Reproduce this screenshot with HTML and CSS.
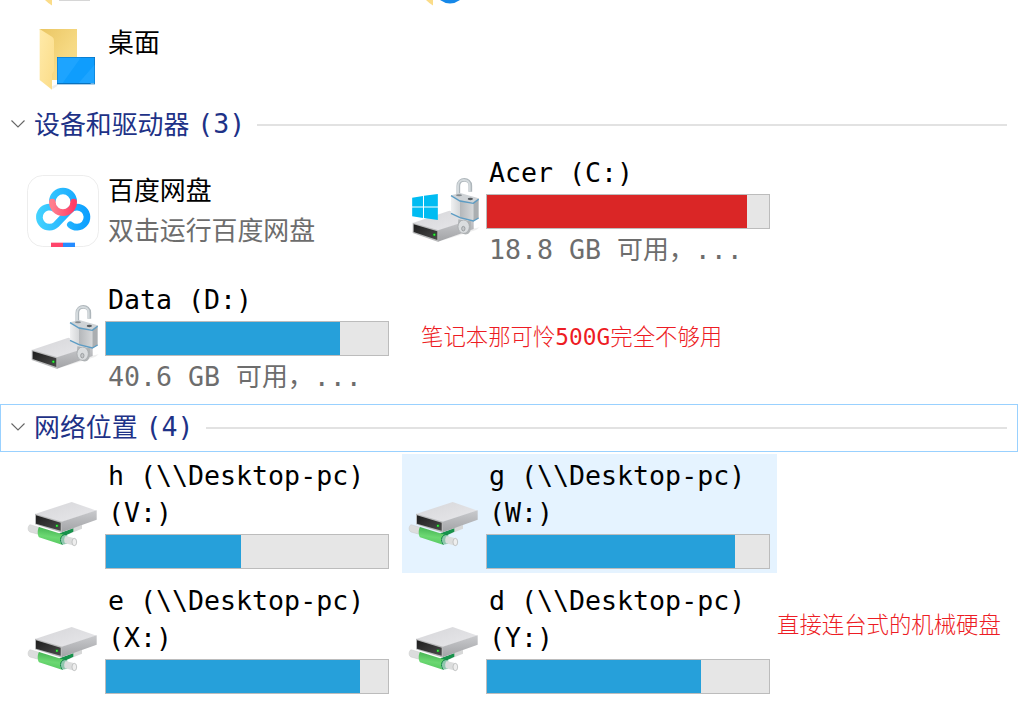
FILE: index.html
```html
<!DOCTYPE html>
<html lang="zh-CN">
<head>
<meta charset="utf-8">
<title>此电脑</title>
<link rel="stylesheet" href="styles.css">
</head>
<body>
<svg class="defs" width="0" height="0" aria-hidden="true">
  <defs>
    <linearGradient id="top" x1="0" y1="0" x2="1" y2="1"><stop offset="0" stop-color="#d6d6d9"/><stop offset="1" stop-color="#e8e8eb"/></linearGradient>
    <linearGradient id="side" x1="0" y1="0" x2="0" y2="1"><stop offset="0" stop-color="#c9cacd"/><stop offset="1" stop-color="#a2a3a6"/></linearGradient>
    <linearGradient id="face" x1="0" y1="0" x2="1" y2="1"><stop offset="0" stop-color="#1e1e1e"/><stop offset="1" stop-color="#4a4a4a"/></linearGradient>
    <linearGradient id="green" x1=".3" y1="0" x2=".1" y2="1"><stop offset="0" stop-color="#44b352"/><stop offset=".5" stop-color="#6cd872"/><stop offset="1" stop-color="#4fc45b"/></linearGradient>
    <linearGradient id="lockL" x1="0" y1="0" x2="1" y2="0"><stop offset="0" stop-color="#f0f1f2"/><stop offset="1" stop-color="#d4d6d8"/></linearGradient>
    <linearGradient id="lockR" x1="0" y1="0" x2="1" y2="0"><stop offset="0" stop-color="#b4b7ba"/><stop offset="1" stop-color="#d6d8da"/></linearGradient>
    <linearGradient id="fold" x1="0" y1="0" x2="1" y2="1"><stop offset="0" stop-color="#ffeaa9"/><stop offset="1" stop-color="#fbdc88"/></linearGradient>
    <linearGradient id="back" x1="0" y1="0" x2="1" y2="1"><stop offset="0" stop-color="#eac663"/><stop offset=".6" stop-color="#f6d983"/><stop offset="1" stop-color="#f9df90"/></linearGradient>
    <linearGradient id="cloud" gradientUnits="userSpaceOnUse" x1="48" y1="0" x2="210" y2="0"><stop offset="0" stop-color="#45d3fe"/><stop offset="1" stop-color="#0a9dff"/></linearGradient>
    <linearGradient id="pink" x1="0" y1="0" x2="1" y2="0"><stop offset="0" stop-color="#ff7f8e"/><stop offset="1" stop-color="#ff3d65"/></linearGradient>

    <symbol id="lockdrive" viewBox="33 54 204 204">
      <path d="M120 249L225 216L236 208L215 212Z" fill="#eee"/>
      <path d="M35 195L145 158L218 184L111 218Z" fill="url(#top)"/>
      <path d="M111 217L218 182V213L111 251Z" fill="url(#side)"/>
      <path d="M35 194L112 217V252L35 225Z" fill="#b9babb"/>
      <path d="M38 199L109 220V246L38 222Z" fill="url(#face)"/>
      <circle cx="100" cy="230" r="5" fill="#167c20"/><circle cx="100" cy="230" r="3" fill="#35f63e"/>
      <path d="M172 108V84C172 59 208 60 208 83V101" fill="none" stroke="#aeb6bb" stroke-width="11"/>
      <path d="M171 108V84C171 60 206 60 206 83V101" fill="none" stroke="#d4dadd" stroke-width="6"/>
      <path d="M150 112L178 105L233 121L218 135L179 130Z" fill="#cfd3d6"/>
      <path d="M150 112L177 127V181L150 167Z" fill="url(#lockL)"/>
      <path d="M177 127L217 133V190L177 181Z" fill="url(#lockR)"/>
      <path d="M217 133L233 121V180L217 190Z" fill="#aaaeb1"/>
      <path d="M150 113L177 129L217 136L233 124M150 166L177 179L217 189L233 180" fill="none" stroke="#5c9cc4" stroke-width="4"/>
      <ellipse cx="208" cy="123" rx="8" ry="3.5" fill="#555b60"/>
      <ellipse cx="174" cy="112" rx="9" ry="3" fill="#848b90"/>
      <path d="M172 184L210 190V210C208 224 202 231 190 229C178 225 172 214 171 202Z" fill="#b0b4b6"/>
      <ellipse cx="188" cy="206" rx="17" ry="20" fill="#dadddf" stroke="#a1a5a8" stroke-width="2"/>
      <ellipse cx="187" cy="212" rx="5" ry="7" fill="#c4c7c9" stroke="#85898c" stroke-width="2"/>
    </symbol>

    <symbol id="netdrive" viewBox="21 105 216 144">
      <path d="M145 190L186 180V191L145 208Z" fill="#d7d8d8"/>
      <path d="M118 205L160 190V200L138 211L120 222Z" fill="#17924b"/>
      <path d="M30 179L60 188V209L30 201C23 198 22 184 30 179Z" fill="#dcdddd" stroke="#c6c7c7" stroke-width="1.5"/>
      <path d="M57 186L132 209C120 213 117 230 126 239L57 217C52 210 52 194 57 186Z" fill="url(#green)"/>
      <path d="M132 209L142 211V236L126 239C118 230 121 212 132 209Z" fill="#8fc7ad"/>
      <path d="M140 209C122 206 116 227 127 239" fill="none" stroke="#138847" stroke-width="3"/>
      <path d="M137 213L164 220V242L135 235C131 228 132 218 137 213Z" fill="#dcdddd"/>
      <ellipse cx="163" cy="231" rx="7" ry="11" fill="#eeeeee" stroke="#aeb0b0" stroke-width="2"/>
      <path d="M45 147L155 111L230 137L125 171Z" fill="url(#top)"/>
      <path d="M125 170L230 136V164L125 202Z" fill="url(#side)"/>
      <path d="M45 146L126 170V203L45 178Z" fill="#b9babb"/>
      <path d="M48 151L122 173V197L48 176Z" fill="url(#face)"/>
      <rect x="107" y="178" width="8" height="8" fill="#198821"/><rect x="108" y="180" width="5" height="5" fill="#38f341"/>
    </symbol>

    <symbol id="winlogo" viewBox="0 0 76 77">
      <path d="M0 11L32 6V37H0ZM35 5L76 0V37H35ZM0 40H32V71L0 66ZM35 40H76V77L35 71Z" fill="#00bcf2"/>
    </symbol>
  </defs>
</svg>

<main class="explorer">
  <section class="folders">
    <div class="cutoff">
      <svg class="cut" width="60" height="6" viewBox="0 0 60 6"><path d="M4 0H11V5.5Q8 4 4 0Z" fill="#fbdc88"/><rect x="18" width="31" height="1" fill="#d6d6d6"/></svg>
      <svg class="cut" width="60" height="6" viewBox="0 0 60 6"><path d="M4 0H11V5.5Q8 4 4 0Z" fill="#fbdc88"/><path d="M18 0H38Q28 7 18 0Z" fill="#1688e8"/></svg>
    </div>
    <article class="tile tile-folder">
      <div class="icon">
        <svg width="60" height="62" viewBox="114 84 180 186">
          <path d="M119 87H231V240H156Z" fill="url(#back)"/>
          <path d="M119 87L157 111Q162 114 162 122V213L156 222V269L119 240Z" fill="url(#fold)"/>
          <path d="M157 258L172 252V258L157 268Z" fill="#eee"/>
          <rect x="171" y="171" width="114" height="82" fill="#0871bd"/>
          <rect x="173" y="173" width="110" height="76" fill="#0f9dfd"/>
          <path d="M173 173H242L188 249H173Z" fill="#1da4ff"/>
          <path d="M283 195V249H236Z" fill="#1ea4ff"/>
          <path d="M272 251H283" stroke="#b9e2ff" stroke-width="2"/>
        </svg>
      </div>
      <div class="body"><div class="name"><span class="cjk">桌面</span></div></div>
    </article>
  </section>

  <header class="group">
    <svg class="chevron" width="14" height="8" viewBox="0 0 14 8"><path d="M.5 .5L7 7L13.5 .5"/></svg>
    <h2><span class="cjk">设备和驱动器</span><span class="count">(3)</span></h2>
    <span class="rule"></span>
  </header>
  <section class="tiles devices">
    <article class="tile tile-app">
      <div class="icon">
        <svg width="72" height="72" viewBox="21 30 216 216">
          <rect x="22.5" y="31.5" width="213" height="213" rx="46" fill="#fff" stroke="#ededed" stroke-width="3"/>
          <g fill="none" stroke-width="20">
            <path d="M104 131A30 30 0 1 0 109 178L149 136A30 30 0 1 1 151 179" stroke="url(#cloud)" stroke-linecap="round"/>
            <path d="M97 110A32 32 0 1 1 161 110" stroke="url(#cloud)"/>
            <path d="M97 111A32 32 0 0 0 161 111" stroke="url(#pink)" stroke-linecap="round"/>
          </g>
          <rect x="93" y="233" width="36" height="13" fill="#ff456b"/><rect x="129" y="233" width="36" height="13" fill="#258cff"/>
        </svg>
      </div>
      <div class="body">
        <div class="name"><span class="cjk">百度网盘</span></div>
        <div class="sub"><span class="cjk">双击运行百度网盘</span></div>
      </div>
    </article>
    <article class="tile">
      <div class="icon icon-lock"><svg width="68" height="68"><use href="#lockdrive"/></svg><svg class="win" width="26" height="26"><use href="#winlogo"/></svg></div>
      <div class="body">
        <div class="name">Acer (C:)</div>
        <div class="bar"><div class="fill full" style="width:260px"></div></div>
        <div class="sub">18.8 GB <span class="cjk">可用，</span>...</div>
      </div>
    </article>
    <article class="tile">
      <div class="icon icon-lock"><svg width="68" height="68"><use href="#lockdrive"/></svg></div>
      <div class="body">
        <div class="name">Data (D:)</div>
        <div class="bar"><div class="fill" style="width:234px"></div></div>
        <div class="sub">40.6 GB <span class="cjk">可用，</span>...</div>
      </div>
    </article>
  </section>

  <header class="group focused">
    <svg class="chevron" width="14" height="8" viewBox="0 0 14 8"><path d="M.5 .5L7 7L13.5 .5"/></svg>
    <h2><span class="cjk">网络位置</span><span class="count">(4)</span></h2>
    <span class="rule"></span>
  </header>
  <section class="tiles network">
    <article class="tile">
      <div class="icon icon-net"><svg width="72" height="48"><use href="#netdrive"/></svg></div>
      <div class="body"><div class="name">h (\\Desktop-pc)<br>(V:)</div><div class="bar"><div class="fill" style="width:135px"></div></div></div>
    </article>
    <article class="tile hover">
      <div class="icon icon-net"><svg width="72" height="48"><use href="#netdrive"/></svg></div>
      <div class="body"><div class="name">g (\\Desktop-pc)<br>(W:)</div><div class="bar"><div class="fill" style="width:248px"></div></div></div>
    </article>
    <article class="tile">
      <div class="icon icon-net"><svg width="72" height="48"><use href="#netdrive"/></svg></div>
      <div class="body"><div class="name">e (\\Desktop-pc)<br>(X:)</div><div class="bar"><div class="fill" style="width:254px"></div></div></div>
    </article>
    <article class="tile">
      <div class="icon icon-net"><svg width="72" height="48"><use href="#netdrive"/></svg></div>
      <div class="body"><div class="name">d (\\Desktop-pc)<br>(Y:)</div><div class="bar"><div class="fill" style="width:214px"></div></div></div>
    </article>
  </section>

  <p class="note note-laptop">笔记本那可怜<b>500G</b>完全不够用</p>
  <p class="note note-desktop">直接连台式的机械硬盘</p>
</main>
</body>
</html>
```
FILE: styles.css
```css
* { box-sizing: border-box; }
body {
  margin: 0;
  background: #fff;
  color: #000;
  font-family: "DejaVu Sans Mono", "Noto Sans CJK SC", monospace;
  font-size: 26.6px;
}
.defs { position: absolute; }
svg { display: block; }
.explorer {
  position: relative;
  width: 1018px;
  height: 703px;
  overflow: hidden;
}
.cjk {
  font-family: "Noto Sans CJK SC", sans-serif;
  font-size: 25.9px;
  line-height: 1;
}

.folders { height: 101px; }
.cutoff {
  display: grid;
  grid-template-columns: 375px 375px;
  column-gap: 6px;
  height: 6px;
  padding-left: 21px;
}
.cut { margin-left: 20px; }

.group {
  display: flex;
  align-items: center;
  height: 48px;
  padding: 0 10px;
  border: 1px solid transparent;
}
.group.focused { border-color: #99d1ff; }
.chevron {
  margin-bottom: 3px;
  fill: none;
  stroke: #666;
  stroke-width: 1.1;
}
.group h2 {
  display: flex;
  align-items: center;
  margin: 0 12px 0 9px;
  padding-bottom: 3px;
  color: #1e3287;
  font-size: 26.6px;
  font-weight: 400;
  line-height: 42px;
}
.group .cjk { padding-bottom: 2px; }
.count { margin-left: 8px; }
.rule {
  flex: 1;
  height: 2px;
  background: #e2e2e2;
}

.tiles {
  display: grid;
  grid-template-columns: 375px 375px;
  gap: 6px;
  padding: 2px 0 0 21px;
}
.devices {
  grid-auto-rows: 121px;
  height: 255px;
}
.network { grid-auto-rows: 119px; }
.tile {
  display: grid;
  grid-template-columns: 84px 284px;
  padding-top: 3px;
}
.tile.hover { background: #e5f3ff; }
.icon { position: relative; padding: 21px 0 0 6px; }
.icon-lock { padding: 22px 0 0 10px; }
.icon-net { padding-top: 43px; }
.win { position: absolute; left: 10px; top: 40px; }
.tile-folder { margin-left: 21px; }
.tile-folder .icon { padding: 19px 0 0 17px; }
.tile-folder .body { padding-top: 15px; }
.tile-app .body { padding-top: 18px; }
.name, .sub {
  padding-left: 3px;
  line-height: 37px;
  white-space: nowrap;
}
.name { margin-bottom: 3px; }
.sub {
  padding-top: 2px;
  color: #6d6d6d;
}
.tile-app .sub { padding-top: 0; }
.bar {
  height: 35px;
  border: 1px solid #bcbcbc;
  background: #e6e6e6;
}
.fill { height: 100%; background: #26a0da; }
.fill.full { background: #da2626; }

.note {
  position: absolute;
  margin: 0;
  color: #ed1c24;
  font-family: "Noto Sans CJK SC", sans-serif;
  font-size: 22.4px;
  font-weight: 300;
  line-height: 32px;
  white-space: nowrap;
}
.note b {
  font-family: "DejaVu Sans Mono", monospace;
  font-size: 22.8px;
}
.note-laptop { left: 421px; top: 319px; }
.note-desktop { left: 777px; top: 607px; }
```
